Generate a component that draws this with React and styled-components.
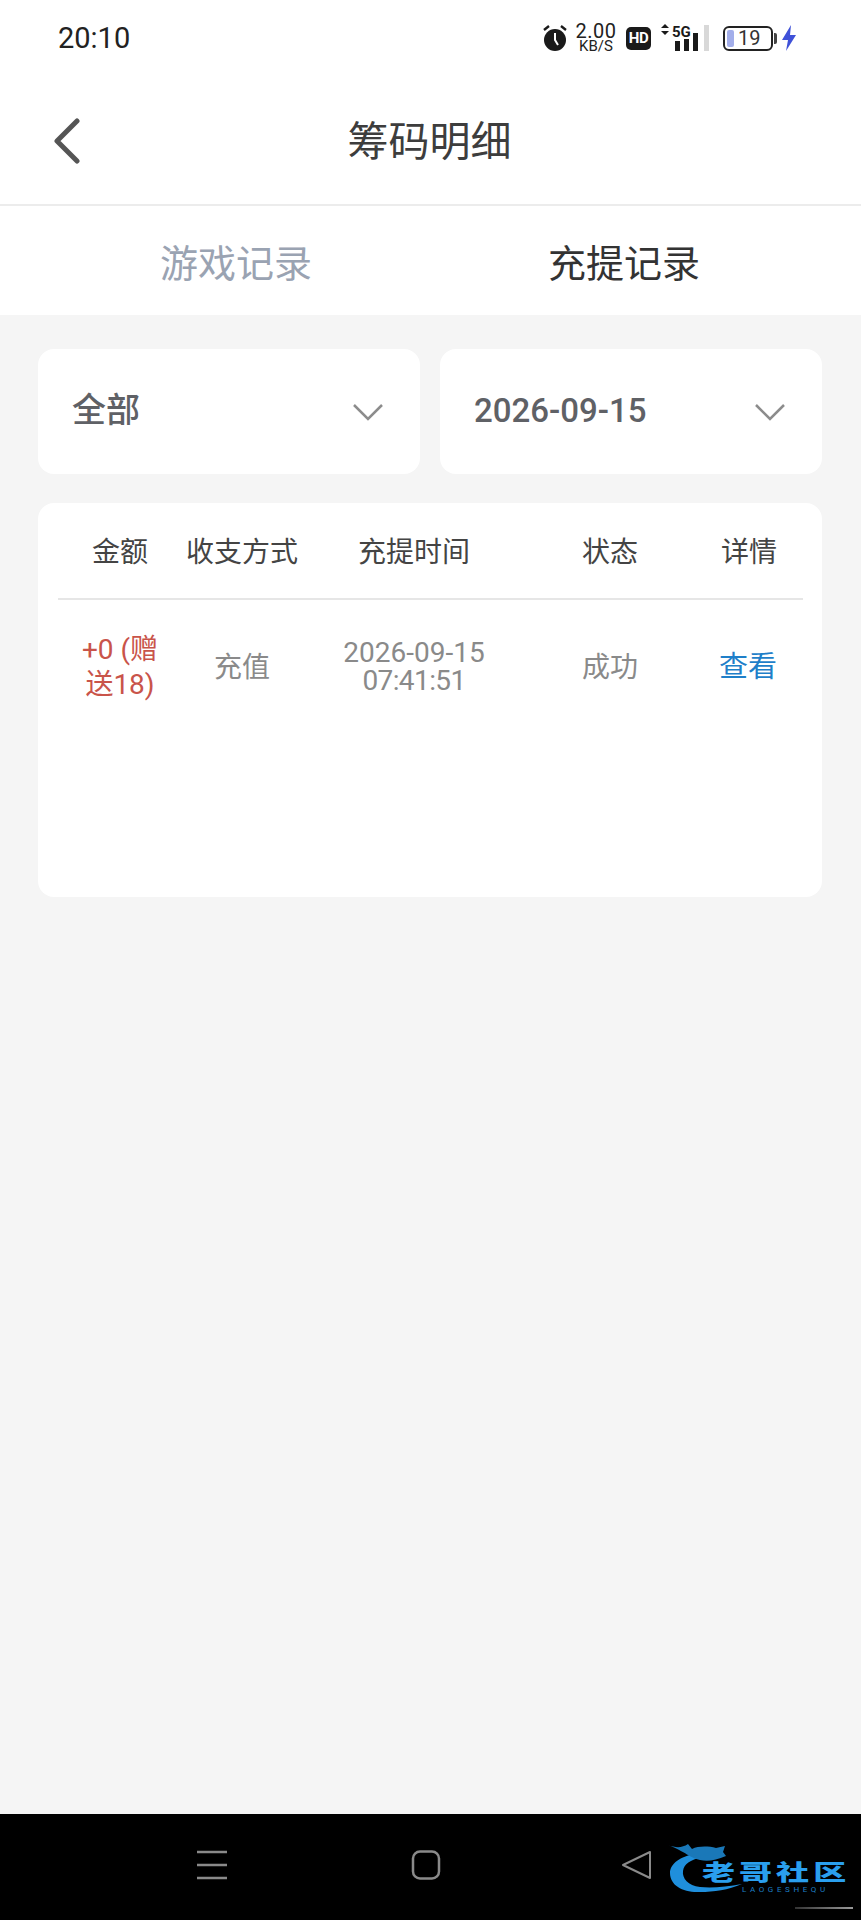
import React from "react";
import styled, { createGlobalStyle } from "styled-components";

const GlobalStyle = createGlobalStyle`
  html, body {
    margin: 0;
    padding: 0;
    background: #f5f5f5;
  }
  * {
    box-sizing: border-box;
  }
`;

const Page = styled.div`
  width: 861px;
  height: 1920px;
  display: flex;
  flex-direction: column;
  background: #f5f5f5;
  font-family: Roboto, "Noto Sans CJK SC", sans-serif;
  overflow: hidden;
`;

const StatusBar = styled.div`
  height: 76px;
  padding: 0 64px 0 58px;
  background: #fff;
  display: flex;
  align-items: center;
  justify-content: space-between;
`;

const Clock = styled.span`
  font-size: 29px;
  color: #222;
`;

const StatusIcons = styled.div`
  display: flex;
  align-items: center;
  height: 30px;
`;

const Speed = styled.div`
  width: 42px;
  margin: 0 9px 0 7px;
  display: flex;
  flex-direction: column;
  align-items: center;
  color: #222;
  font-size: 20px;
  line-height: 17px;
  letter-spacing: 0.5px;
  small {
    font-size: 15px;
    line-height: 13px;
    letter-spacing: 0;
  }
`;

const HdBadge = styled.span`
  width: 25px;
  height: 23px;
  border-radius: 5px;
  background: #1a1a1a;
  color: #fff;
  font-size: 15px;
  font-weight: 700;
  letter-spacing: -0.5px;
  display: flex;
  align-items: center;
  justify-content: center;
`;

const Signal = styled.svg`
  width: 50px;
  height: 28px;
  margin: 0 13px 0 9px;
  overflow: visible;
`;

const SignalLabel = styled.text`
  font-family: Roboto, sans-serif;
  font-size: 15px;
  font-weight: 700;
  fill: #1a1a1a;
`;

const Battery = styled.div`
  position: relative;
  width: 50px;
  height: 25px;
  border: 2px solid #222;
  border-radius: 6px;
  padding: 2px;
  display: flex;
  align-items: center;
  gap: 4px;
  color: #333;
  font-size: 20px;
  &::after {
    content: "";
    position: absolute;
    right: -6px;
    top: 5px;
    width: 3px;
    height: 11px;
    border-radius: 0 2px 2px 0;
    background: #444;
  }
`;

const BatteryLevel = styled.span`
  width: 7px;
  height: 17px;
  border-radius: 2px;
  background: #a3aeea;
`;

const Bolt = styled.svg`
  width: 16px;
  height: 26px;
  margin-left: 8px;
`;

const Header = styled.header`
  position: relative;
  height: 130px;
  background: #fff;
  display: flex;
  align-items: center;
  justify-content: center;
  border-bottom: 2px solid #ececec;
`;

const BackButton = styled.svg`
  position: absolute;
  left: 52px;
  top: 42px;
  width: 30px;
  height: 46px;
`;

const Title = styled.h1`
  margin: 0 2px 4px 0;
  font-size: 41px;
  font-weight: 400;
  color: #3d3d3d;
`;

const Tabs = styled.nav`
  height: 109px;
  padding: 0 43px 0 42px;
  background: #fff;
  display: grid;
  grid-template-columns: 1fr 1fr;
  align-items: center;
`;

const Tab = styled.span`
  text-align: center;
  font-size: 38px;
  color: ${p => (p.$active ? "#333" : "#9aa3b2")};
`;

const Content = styled.main`
  flex: 1;
  padding: 34px 39px 0 38px;
`;

const Filters = styled.div`
  display: grid;
  grid-template-columns: 1fr 1fr;
  gap: 20px;
`;

const Select = styled.div`
  height: 125px;
  padding: 0 37px 0 34px;
  border-radius: 16px;
  background: #fff;
  display: flex;
  align-items: center;
  justify-content: space-between;
`;

const SelectLabel = styled.span`
  color: #5f6166;
  font-size: ${p => (p.$date ? "33px" : "34px")};
  font-weight: 500;
  margin-bottom: ${p => (p.$date ? "2px" : "8px")};
`;

const Chevron = styled.svg`
  width: 30px;
  height: 17px;
  margin-top: 2px;
`;

const Card = styled.section`
  height: 394px;
  margin-top: 29px;
  padding: 0 19px 0 20px;
  border-radius: 16px;
  background: #fff;
`;

const Row = styled.div`
  display: grid;
  grid-template-columns: 124px 120px 224px 168px 110px;
  align-items: center;
  height: ${p => (p.$head ? "97px" : "134px")};
  border-bottom: ${p => (p.$head ? "2px solid #e6e6e6" : "none")};
  padding-top: ${p => (p.$head ? "3px" : "0")};
  font-size: 28px;
  color: ${p => (p.$head ? "#444" : "#8a8a8a")};
`;

const Cell = styled.div`
  text-align: center;
  line-height: ${p => (p.$tight ? "28px" : "35px")};
`;

const Amount = styled(Cell)`
  padding: 0 16px;
  color: #c9544a;
`;

const Detail = styled(Cell)`
  color: #1f7fc9;
  margin-left: -2px;
  font-size: 29px;
`;

const TimeText = styled.span`
  letter-spacing: -0.6px;
`;

const NavBar = styled.footer`
  position: relative;
  height: 106px;
  background: #000;
  display: flex;
  align-items: center;
  padding: 0 0 0 197px;
`;

const NavIcon = styled.svg`
  width: 30px;
  height: 30px;
  margin-right: ${p => p.$gap || 0}px;
  position: relative;
  top: -2px;
`;

const Logo = styled.div`
  position: absolute;
  left: 668px;
  top: 26px;
  width: 186px;
  height: 60px;
`;

const LogoRing = styled.svg`
  position: absolute;
  left: 0;
  top: 0;
  width: 80px;
  height: 60px;
`;

const LogoName = styled.span`
  position: absolute;
  left: 34px;
  top: 21px;
  font-size: 22px;
  line-height: 24px;
  font-weight: 900;
  white-space: nowrap;
  letter-spacing: 2.7px;
  color: #2a9fee;
  transform: scaleX(1.5);
  transform-origin: left center;
`;

const LogoSub = styled.span`
  position: absolute;
  left: 74px;
  top: 45px;
  font-size: 8px;
  line-height: 9px;
  letter-spacing: 3.6px;
  color: #1c7fc4;
`;

const Watermark = styled.span`
  position: absolute;
  right: 8px;
  bottom: 11px;
  width: 58px;
  height: 2px;
  background: linear-gradient(90deg, #333, #999);
`;

const records = [
  {
    amount: "+0 (赠送18)",
    method: "充值",
    date: "2026-09-15",
    time: "07:41:51",
    status: "成功"
  }
];

export default function App() {
  return (
    <Page>
      <GlobalStyle />
      <StatusBar>
        <Clock>20:10</Clock>
        <StatusIcons>
          <svg width="26" height="28" viewBox="0 0 26 28">
            <circle cx="13" cy="16" r="11" fill="#1a1a1a" />
            <path d="M13 9v7l3 5" stroke="#fff" strokeWidth="2" fill="none" />
            <path d="M2 6l5-4M24 6l-5-4" stroke="#1a1a1a" strokeWidth="2.4" />
          </svg>
          <Speed>
            2.00
            <small>KB/S</small>
          </Speed>
          <HdBadge>HD</HdBadge>
          <Signal viewBox="0 0 50 28">
            <path d="M5 0l4 4H1zM5 11l4-4H1z" fill="#1a1a1a" />
            <SignalLabel x="12" y="13">5G</SignalLabel>
            <rect x="15" y="17" width="5" height="10" fill="#1a1a1a" />
            <rect x="24" y="15" width="5" height="12" fill="#1a1a1a" />
            <rect x="33" y="9" width="5" height="18" fill="#1a1a1a" />
            <rect x="44" y="1" width="5" height="26" fill="#d8d8d8" />
          </Signal>
          <Battery>
            <BatteryLevel />
            19
          </Battery>
          <Bolt viewBox="0 0 16 26">
            <path d="M10 0L1 15h6l-2 11 10-16H9z" fill="#3f51d8" />
          </Bolt>
        </StatusIcons>
      </StatusBar>

      <Header>
        <BackButton viewBox="0 0 30 46">
          <path
            d="M25 3L5 23l20 20"
            fill="none"
            stroke="#555"
            strokeWidth="5"
            strokeLinecap="round"
            strokeLinejoin="round"
          />
        </BackButton>
        <Title>筹码明细</Title>
      </Header>

      <Tabs>
        <Tab>游戏记录</Tab>
        <Tab $active>充提记录</Tab>
      </Tabs>

      <Content>
        <Filters>
          <Select>
            <SelectLabel>全部</SelectLabel>
            <Chevron viewBox="0 0 30 17">
              <path d="M1 1l14 14L29 1" fill="none" stroke="#8c8c8c" strokeWidth="2.5" />
            </Chevron>
          </Select>
          <Select>
            <SelectLabel $date>2026-09-15</SelectLabel>
            <Chevron viewBox="0 0 30 17">
              <path d="M1 1l14 14L29 1" fill="none" stroke="#8c8c8c" strokeWidth="2.5" />
            </Chevron>
          </Select>
        </Filters>

        <Card>
          <Row $head>
            <Cell>金额</Cell>
            <Cell>收支方式</Cell>
            <Cell>充提时间</Cell>
            <Cell>状态</Cell>
            <Cell>详情</Cell>
          </Row>
          {records.map(row => (
            <Row key={row.date + row.time}>
              <Amount>{row.amount}</Amount>
              <Cell>{row.method}</Cell>
              <Cell $tight>
                {row.date}
                <br />
                <TimeText>{row.time}</TimeText>
              </Cell>
              <Cell>{row.status}</Cell>
              <Detail>查看</Detail>
            </Row>
          ))}
        </Card>
      </Content>

      <NavBar>
        <NavIcon viewBox="0 0 30 30" $gap={184}>
          <path d="M0 2h30M0 15h30M0 28h30" stroke="#8a8a8a" strokeWidth="2.5" />
        </NavIcon>
        <NavIcon viewBox="0 0 30 30" $gap={181}>
          <rect x="2" y="1.5" width="26" height="27" rx="7" fill="none" stroke="#8a8a8a" strokeWidth="2.5" />
        </NavIcon>
        <NavIcon viewBox="0 0 30 30">
          <path
            d="M28 2v26L1 15z"
            fill="none"
            stroke="#8a8a8a"
            strokeWidth="2"
            strokeLinejoin="round"
          />
        </NavIcon>
        <Logo>
          <LogoRing viewBox="0 0 80 60">
            <path
              d="M30 13C12 16 2 24 2 33C2 46 16 53 32 52C46 52 60 50 74 44C58 47 44 48 32 47C20 46 14 38 15 31C16 24 22 20 34 17Z"
              fill="#1f8fdc"
            />
            <path
              d="M0 5C8 8 14 8 20 4L24 9C30 6 40 6 48 8L57 6L55 12L58 16C48 20 40 22 32 20C22 18 18 12 0 5Z"
              fill="#1a78b8"
            />
          </LogoRing>
          <LogoName>老哥社区</LogoName>
          <LogoSub>LAOGESHEQU</LogoSub>
        </Logo>
        <Watermark />
      </NavBar>
    </Page>
  );
}
